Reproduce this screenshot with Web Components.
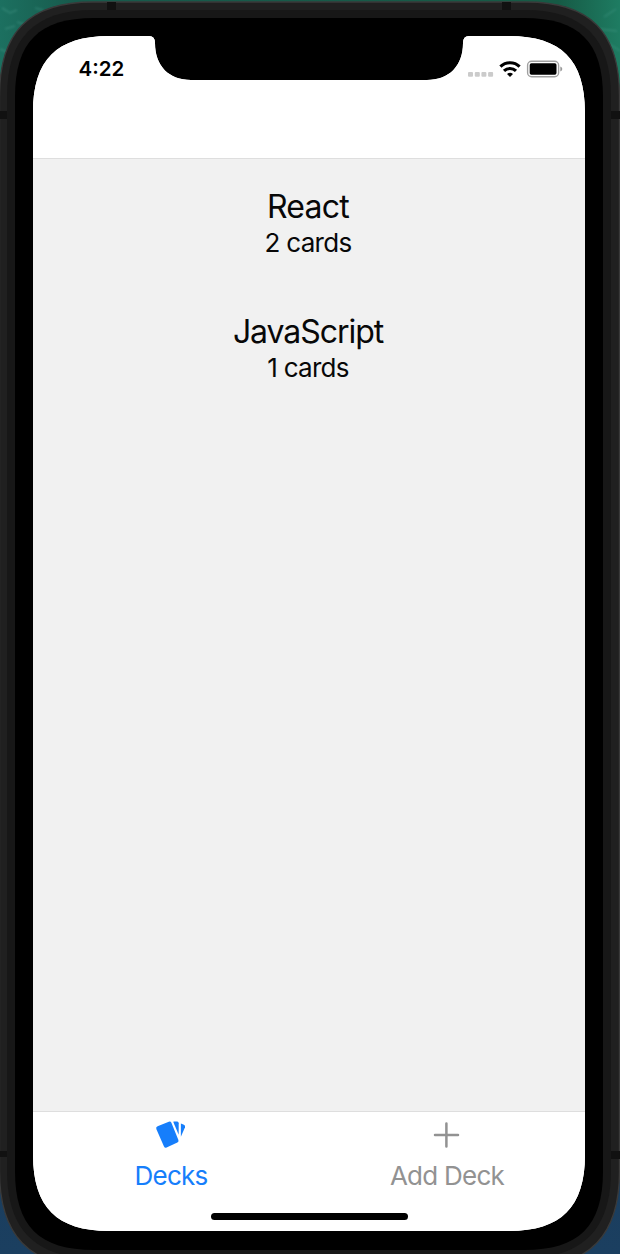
<!DOCTYPE html>
<html lang="en">
<head>
<meta charset="utf-8">
<title>Decks</title>
<style>
html,body{margin:0;width:620px;height:1254px;overflow:hidden;background:#174d46}
</style>
</head>
<body>
<phone-frame>
  <status-bar slot="screen" time="4:22"></status-bar>
  <deck-list slot="screen">
    <deck-item><span slot="name" style="letter-spacing:-.75px">React</span><span slot="count">2 cards</span></deck-item>
    <deck-item><span slot="name" style="letter-spacing:-1.05px">JavaScript</span><span slot="count">1 cards</span></deck-item>
  </deck-list>
  <tab-bar slot="screen">
    <tab-item active>
      <svg slot="icon" width="32" height="30" viewBox="0 0 32 30" fill="#167efb"><path d="M2.6 5.2 13.8 .7Q15.6 .1 16.4 1.7L23.4 18.9Q24 20.7 22.4 21.6L11.6 26.5Q9.8 27.2 9 25.5L1.3 7.9Q.7 6 2.6 5.2Z"/><path d="M18.6.6h3.6q1.5 0 1.5 1.7v11.4L18.3 1Z"/><path d="M25.9 2.6 28.9 3.8Q30.6 4.5 30 6.2L25.9 15.7Z"/></svg>
      Decks
    </tab-item>
    <tab-item>
      <svg slot="icon" width="32" height="30" viewBox="0 0 32 30" fill="none" stroke="#929292" stroke-width="2.5" stroke-linecap="round"><path d="M4 14.1h23M15.4 2.6v23"/></svg>
      Add Deck
    </tab-item>
  </tab-bar>
</phone-frame>
<script>
function define(name, html) {
  customElements.define(name, class extends HTMLElement {
    constructor() {
      super();
      const t = document.createElement('template');
      t.innerHTML = html;
      this.attachShadow({mode: 'open'}).append(t.content.cloneNode(true));
    }
    connectedCallback() {
      const time = this.shadowRoot.querySelector('time');
      if (time) time.textContent = this.getAttribute('time');
    }
  });
}

define('phone-frame', `
<style>
:host{display:grid;width:620px;height:1254px;overflow:hidden;font-family:Inter,"Liberation Sans",sans-serif;color:#080808}
.body,main{grid-area:1/1}
main{display:flex;flex-direction:column;width:552px;height:1195px;margin:36px 0 0 33px;background:#fff;
clip-path:path("M0 76C0 24 24 0 76 0H116Q122 0 122 7C122 30 136 44 158 44H394C416 44 430 30 430 7Q430 0 436 0H476C528 0 552 24 552 76V1119C552 1171 528 1195 476 1195H76C24 1195 0 1171 0 1119Z")}
</style>
<svg class="body" width="620" height="1254">
<defs>
<linearGradient id="sea"><stop stop-color="#1c7060"/><stop offset=".12" stop-color="#175a4c"/><stop offset=".9" stop-color="#165a45"/><stop offset="1" stop-color="#1e7c62"/></linearGradient>
<linearGradient id="deep" x2="0" y2="1"><stop stop-color="#163550"/><stop offset="1" stop-color="#1b3f60"/></linearGradient>
<filter id="soft"><feGaussianBlur stdDeviation="1"/></filter>
</defs>
<rect width="620" height="627" fill="url(#sea)"/><rect y="627" width="620" height="627" fill="url(#deep)"/>
<path filter="url(#soft)" fill="none" stroke="#55a898" stroke-opacity=".35" stroke-width="1.5" d="M2 8l8 5 7-3M17 22l10 3M5 29l10-3M0 49l7 3M35 8l8 2M604 17l12-8M600 29l17 2M608 43l12 8"/>
<path fill="#202020" stroke="#3a3a3a" stroke-width="1.3" d="M-.5 96C-.5 32 29 2 93 2H526C590 2 619.5 32 619.5 96V1171C619.5 1235 590 1267 526 1267H93C29 1267 -.5 1235 -.5 1171Z"/>
<path fill="#111" d="M107 2h9v8h-9zM502 2h9v8h-9zM0 111h8v8H0zM611 111h9v8h-9zM0 1151h8v6H0zM611 1151h9v8h-9z"/>
<path fill="#171717" d="M7 96C7 38 35 10 93 10H525C583 10 611 38 611 96V1171C611 1229 583 1258 525 1258H93C35 1258 7 1229 7 1171Z"/>
<path fill="#000" d="M15 97C15 42 39 18 94 18H524C579 18 603 42 603 97V1171C603 1226 579 1250 524 1250H94C39 1250 15 1226 15 1171Z"/>
</svg>
<main><slot name="screen"></slot></main>`);

define('status-bar', `
<style>
:host{display:flex;justify-content:space-between;align-items:flex-start;box-sizing:border-box;height:123px;flex:none;padding:21px 22px 0 45.5px;border-bottom:1px solid #dedede;background:#fff}
time{font-size:20.5px;line-height:24px;font-weight:600;color:#000}
svg{display:block}
</style>
<time></time>
<svg width="96" height="24" viewBox="467 57 96 24">
<g fill="#cbcbcb"><rect x="468" y="72" width="5" height="4.7" rx="1"/><rect x="474.8" y="72" width="5" height="4.7" rx="1"/><rect x="481.4" y="72" width="5" height="4.7" rx="1"/><rect x="488.1" y="72" width="5" height="4.7" rx="1"/></g>
<g fill="none" stroke="#000" stroke-width="3.1"><path d="M500.4 66.6a13.8 13.8 0 0 1 19.2 0M504 70.9a8.6 8.6 0 0 1 12 0"/></g>
<path d="M507 74q3-2.4 6 0L510 77Z"/>
<rect x="527.6" y="61.3" width="31" height="15.4" rx="4" fill="none" stroke="#a0a0a0" stroke-width="1.4"/>
<rect x="529.7" y="63.3" width="26.8" height="11.4" rx="1.7"/>
<path d="M560.3 66.4q2 .9 2 2.6t-2 2.6z" fill="#999"/>
</svg>`);

define('deck-list', `
<style>:host{display:flex;flex-direction:column;flex:1;gap:47px;padding-top:27px;background:#f1f1f1}</style>
<slot></slot>`);

define('deck-item', `
<style>
:host{display:flex;flex-direction:column;align-items:center;text-align:center;width:550px}
h2{font-weight:400;font-size:32px;line-height:41px;margin:0}
p{font-size:26px;line-height:32px;letter-spacing:-.7px;margin:0;height:37px}
</style>
<h2><slot name="name"></slot></h2><p><slot name="count"></slot></p>`);

define('tab-bar', `
<style>
:host{display:grid;grid-template-columns:1fr 1fr;grid-template-rows:101px 1fr;flex:none;box-sizing:border-box;height:120px;border-top:1px solid #dedede;background:#fff}
i{grid-column:1/3;justify-self:center;width:197px;height:7px;border-radius:4px;background:#000}
</style>
<slot></slot><i></i>`);

define('tab-item', `
<style>
:host{display:flex;flex-direction:column;align-items:center;padding-top:9px;gap:9px;font-size:26px;line-height:32px;letter-spacing:-.75px;color:#929292}
:host([active]){color:#167efb}
</style>
<slot name="icon"></slot><span><slot></slot></span>`);
</script>
</body>
</html>
